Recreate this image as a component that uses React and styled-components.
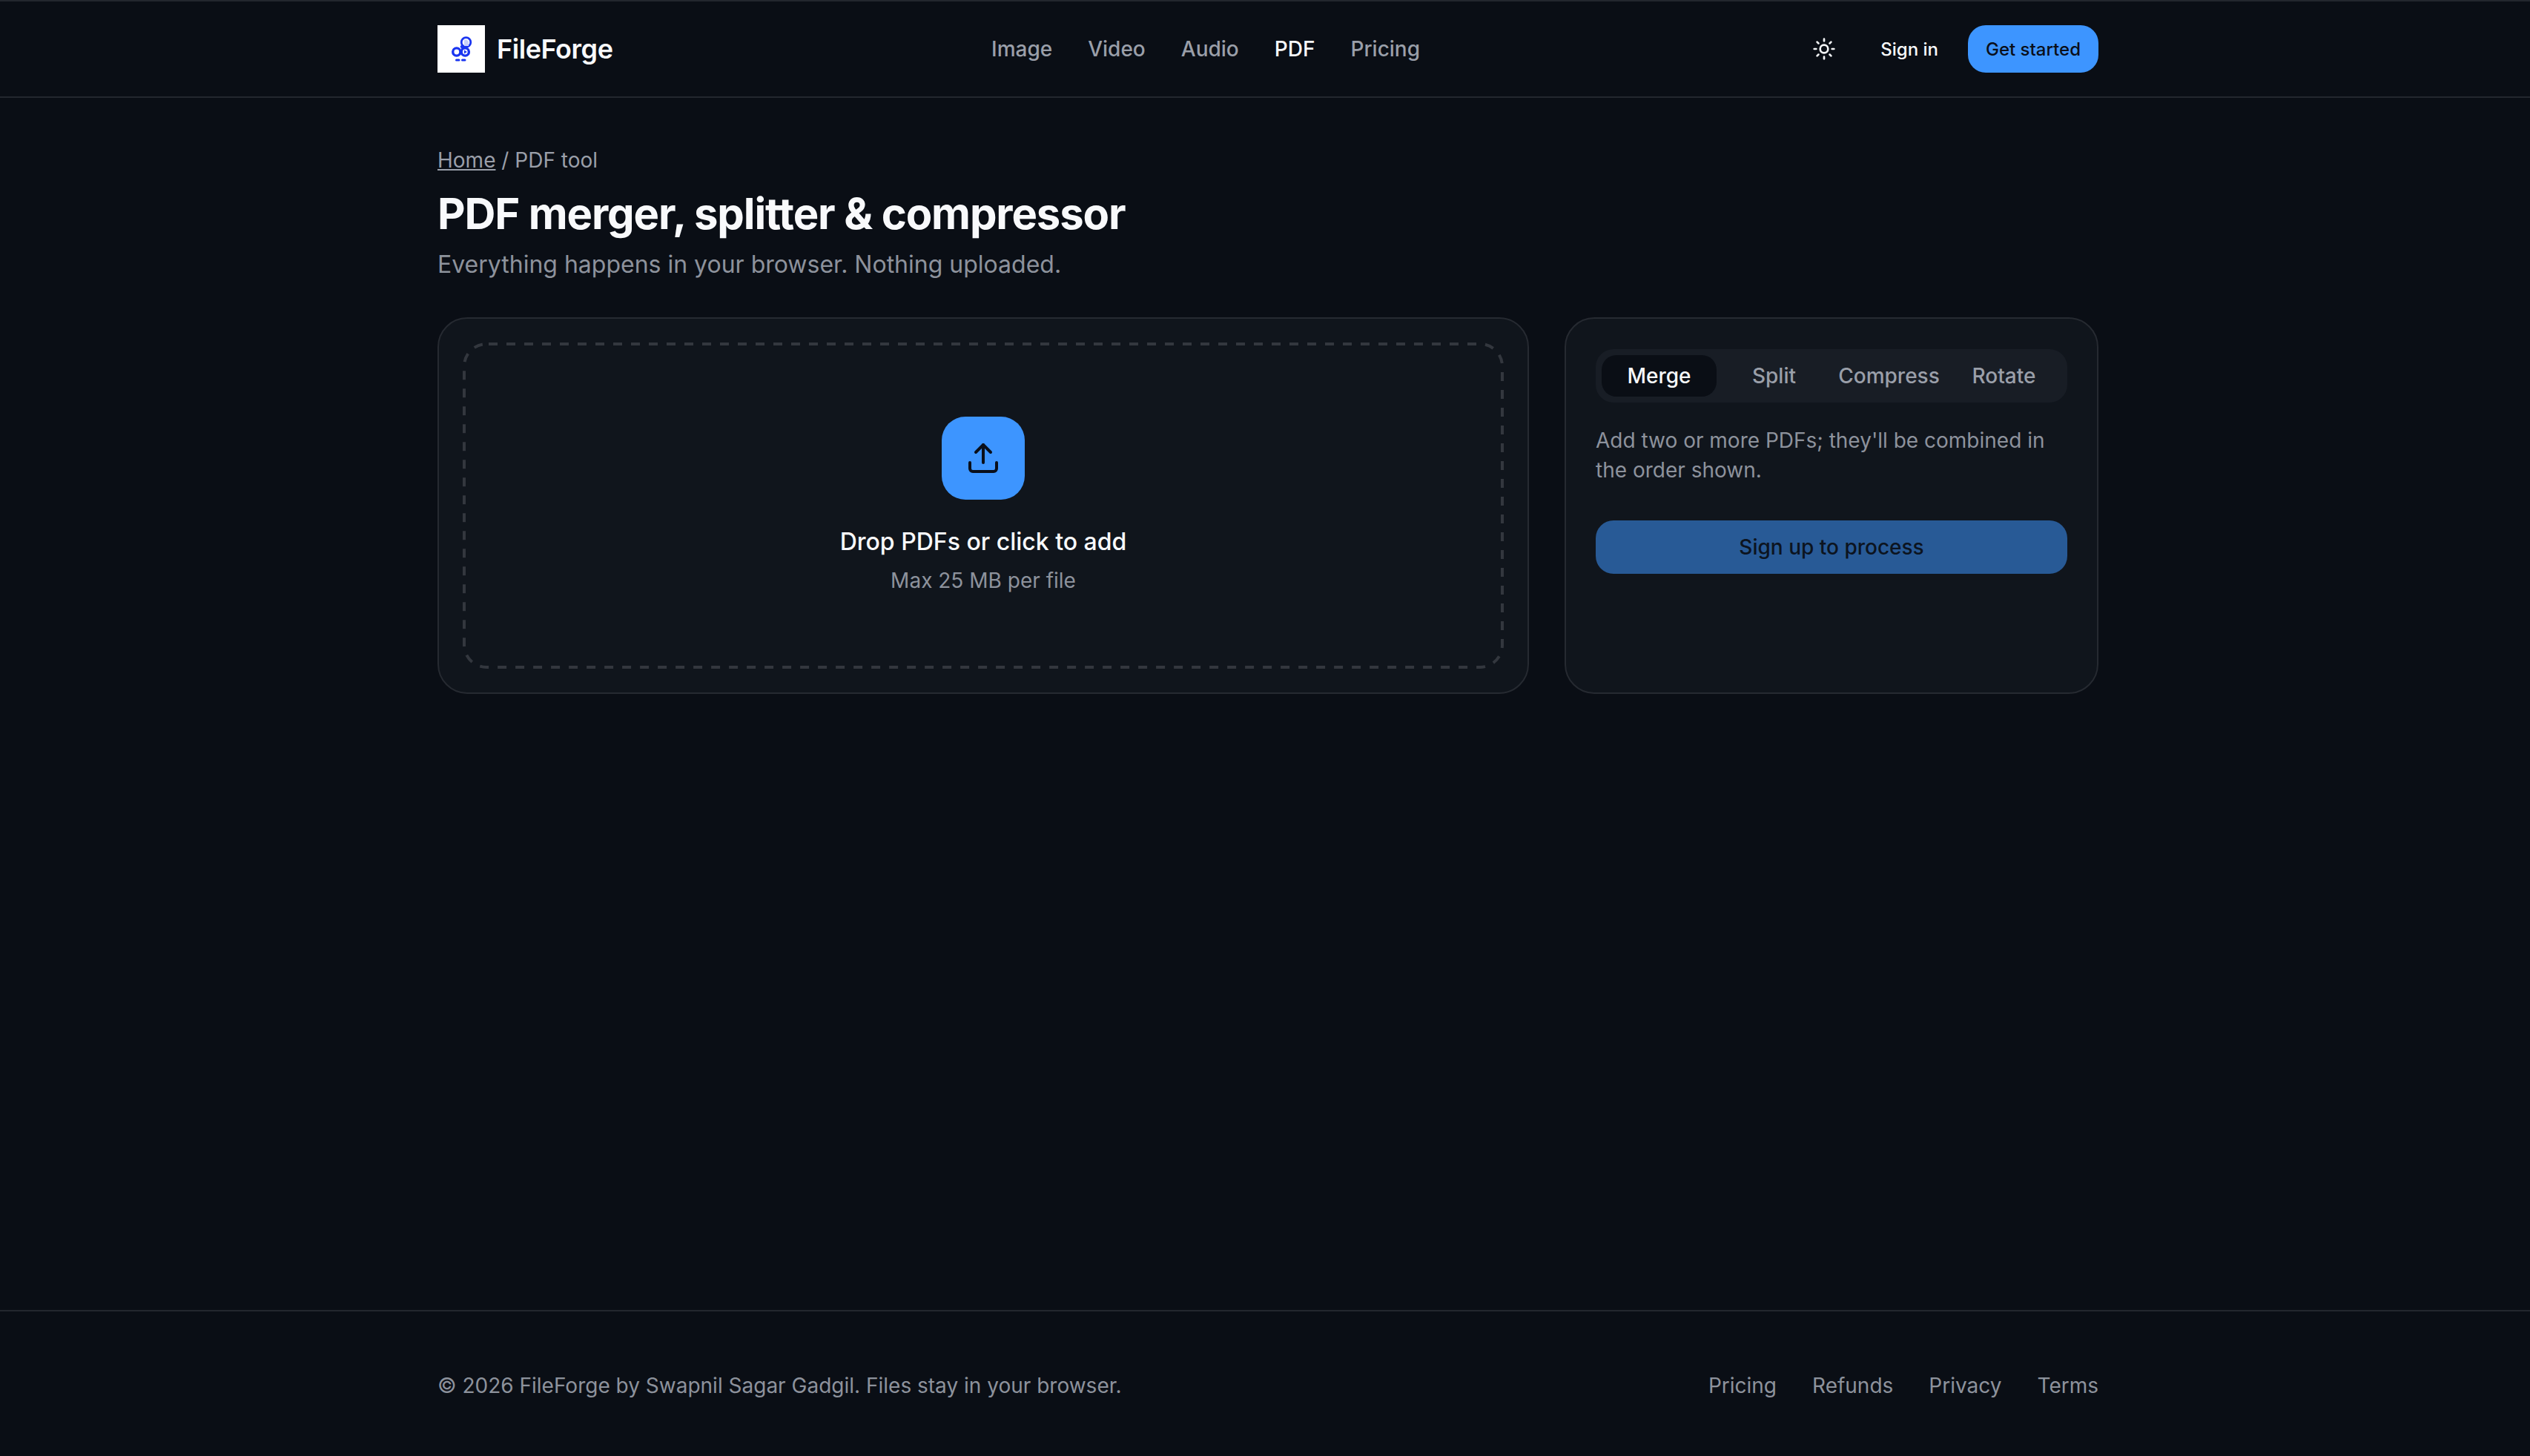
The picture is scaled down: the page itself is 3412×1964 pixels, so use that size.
import React from 'react';
import styled, { createGlobalStyle } from 'styled-components';
import { Sun, Upload } from 'lucide-react';

const Global = createGlobalStyle`
  html, body { margin: 0; padding: 0; background: #0a0e15; }
  * { box-sizing: border-box; }
  body { font-family: Inter, "Liberation Sans", sans-serif; color: #f5f7fa; }
`;

const Page = styled.div`
  min-height: 1964px;
  display: flex;
  flex-direction: column;
  background: #0a0e15;
`;
const Container = styled.div`
  width: 2240px;
  margin-left: 590px;
`;
const Header = styled.header`
  height: 132px;
  border-top: 2px solid #23272e;
  border-bottom: 2px solid #23272e;
`;
const HeaderRow = styled(Container)`
  height: 128px;
  display: flex;
  align-items: center;
`;
const Brand = styled.a`
  width: 747px;
  display: flex;
  align-items: center;
  gap: 16px;
  font-size: 36px;
  font-weight: 600;
  letter-spacing: -0.45px;
  color: #f8f9fb;
`;
const LogoBox = styled.svg`
  width: 64px;
  height: 64px;
  display: block;
`;
const Nav = styled.nav`
  display: flex;
  gap: 48px;
  font-size: 28px;
  font-weight: 500;
`;
const NavLink = styled.a`
  color: ${p => (p.$active ? '#f8f9fb' : '#9a9fa9')};
`;
const Actions = styled.div`
  margin-left: auto;
  display: flex;
  align-items: center;
`;
const IconButton = styled.button`
  width: 32px;
  height: 32px;
  margin-right: 60px;
  padding: 0;
  background: none;
  border: 0;
  color: #f3f4f6;
`;
const SignIn = styled.a`
  font-size: 24px;
  font-weight: 500;
  color: #f8f9fb;
  margin-right: 40px;
`;
const Primary = styled.a`
  height: 64px;
  padding: 0 24px;
  display: flex;
  align-items: center;
  border-radius: 24px;
  background: #3d95ff;
  color: #0a0f1a;
  font-size: 24px;
  font-weight: 500;
`;
const Main = styled.main`
  flex: 1;
  padding-top: 64px;
`;
const Crumbs = styled.div`
  font-size: 28px;
  line-height: 40px;
  color: #9a9fa9;
  a { color: #9a9fa9; text-decoration: underline; }
`;
const Title = styled.h1`
  margin: 16px 0 0;
  font-size: 58px;
  line-height: 72px;
  font-weight: 700;
  letter-spacing: -1.12px;
  color: #f8f9fb;
`;
const Subtitle = styled.p`
  margin: 9px 0 0;
  font-size: 32px;
  line-height: 48px;
  color: #8d929c;
`;
const Grid = styled.div`
  margin-top: 47px;
  display: grid;
  grid-template-columns: 1472px 720px;
  gap: 48px;
`;
const Card = styled.section`
  height: 508px;
  border: 2px solid #262a31;
  border-radius: 40px;
  background: #10151c;
`;
const DropCard = styled(Card)`
  padding: 32px;
`;
const Dropzone = styled.div`
  position: relative;
  height: 440px;
  display: flex;
  flex-direction: column;
  align-items: center;
  justify-content: center;
`;
const DashedEdge = styled.svg`
  position: absolute;
  inset: 0;
  width: 100%;
  height: 100%;
  fill: none;
  stroke: #33373e;
  stroke-width: 4;
  stroke-dasharray: 12 12;
  stroke-dashoffset: -3;
`;
const UploadBadge = styled.div`
  width: 112px;
  height: 112px;
  border-radius: 32px;
  background: #3d95ff;
  color: #0a0f1a;
  display: flex;
  align-items: center;
  justify-content: center;
`;
const DropTitle = styled.div`
  margin-top: 33px;
  font-size: 32px;
  line-height: 48px;
  font-weight: 500;
  color: #f8f9fb;
`;
const DropHint = styled.div`
  margin-top: 8px;
  font-size: 28px;
  line-height: 40px;
  color: #8d929c;
`;
const SideCard = styled(Card)`
  padding: 41px 40px;
`;
const Tabs = styled.div`
  height: 72px;
  padding: 8px;
  border-radius: 24px;
  background: #181d25;
  display: grid;
  grid-template-columns: repeat(4, 1fr);
`;
const Tab = styled.button`
  height: 56px;
  padding: 0;
  border: 0;
  border-radius: 20px;
  font-family: inherit;
  font-size: 28px;
  font-weight: 500;
  background: ${p => (p.$active ? '#0a0e15' : 'transparent')};
  color: ${p => (p.$active ? '#f8f9fb' : '#9a9fa9')};
`;
const Help = styled.p`
  margin: 31px 0 0;
  font-size: 28px;
  line-height: 40px;
  color: #8d929c;
`;
const Process = styled.button`
  width: 100%;
  height: 72px;
  margin-top: 48px;
  padding: 0;
  border: 0;
  border-radius: 24px;
  background: #285a96;
  color: #0c1420;
  font-family: inherit;
  font-size: 28px;
  font-weight: 500;
`;
const Footer = styled.footer`
  height: 197px;
  border-top: 2px solid #23272e;
`;
const FooterRow = styled(Container)`
  padding-top: 80px;
  display: flex;
  justify-content: space-between;
  font-size: 28px;
  line-height: 40px;
  color: #8d929c;
`;
const FooterLinks = styled.div`
  display: flex;
  gap: 48px;
`;

const Logo = () => (
  <LogoBox viewBox="0 0 64 64">
    <rect width="64" height="64" fill="#fff" />
    <g fill="none" stroke="#1a35f0">
      <circle cx="38.500" cy="23" r="6.300" strokeWidth="2.800" />
      <circle cx="25.800" cy="36" r="5.100" strokeWidth="3.400" />
      <circle cx="37.300" cy="36" r="5.100" strokeWidth="3.400" />
    </g>
    <path d="M32.500 26l5 5-5 1-2-3z" fill="#1a35f0" />
    <path d="M36 19.500h3.500l2.500 2.500v6h-6z" fill="#c8d0fa" />
    <path d="M36 33.500l3.800 2.500-3.800 2.500z" fill="#1a35f0" />
    <rect x="24" y="45.400" width="6.500" height="3" rx="1.500" fill="#1a35f0" />
    <rect x="32" y="45.400" width="6.500" height="3" rx="1.500" fill="#1a35f0" />
  </LogoBox>
);

export default function App() {
  return (
    <Page>
      <Global />
      <Header>
        <HeaderRow>
          <Brand><Logo />FileForge</Brand>
          <Nav>
            <NavLink>Image</NavLink>
            <NavLink>Video</NavLink>
            <NavLink>Audio</NavLink>
            <NavLink $active>PDF</NavLink>
            <NavLink>Pricing</NavLink>
          </Nav>
          <Actions>
            <IconButton><Sun size={32} /></IconButton>
            <SignIn>Sign in</SignIn>
            <Primary>Get started</Primary>
          </Actions>
        </HeaderRow>
      </Header>
      <Main>
        <Container>
          <Crumbs><a>Home</a> / PDF tool</Crumbs>
          <Title>PDF merger, splitter &amp; compressor</Title>
          <Subtitle>Everything happens in your browser. Nothing uploaded.</Subtitle>
          <Grid>
            <DropCard>
              <Dropzone>
                <DashedEdge viewBox="0 0 1404 440">
                  <rect x="2" y="2" width="1400" height="436" rx="30" />
                </DashedEdge>
                <UploadBadge><Upload size={48} /></UploadBadge>
                <DropTitle>Drop PDFs or click to add</DropTitle>
                <DropHint>Max 25 MB per file</DropHint>
              </Dropzone>
            </DropCard>
            <SideCard>
              <Tabs>
                <Tab $active>Merge</Tab>
                <Tab>Split</Tab>
                <Tab>Compress</Tab>
                <Tab>Rotate</Tab>
              </Tabs>
              <Help>Add two or more PDFs; they'll be combined in the order shown.</Help>
              <Process>Sign up to process</Process>
            </SideCard>
          </Grid>
        </Container>
      </Main>
      <Footer>
        <FooterRow>
          <span>© 2026 FileForge by Swapnil Sagar Gadgil. Files stay in your browser.</span>
          <FooterLinks>
            <span>Pricing</span>
            <span>Refunds</span>
            <span>Privacy</span>
            <span>Terms</span>
          </FooterLinks>
        </FooterRow>
      </Footer>
    </Page>
  );
}
